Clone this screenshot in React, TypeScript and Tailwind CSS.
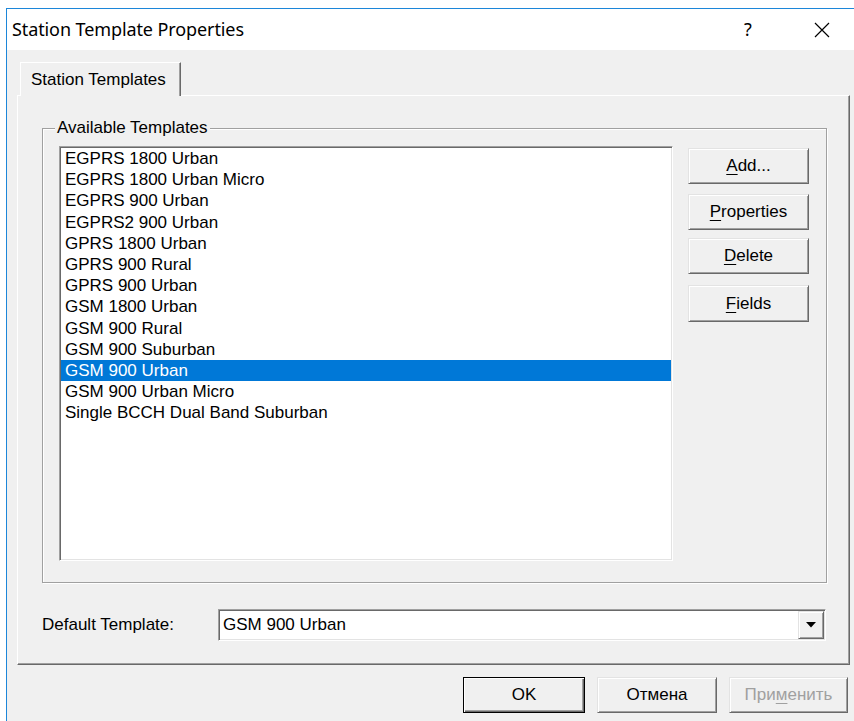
import type { ReactNode } from 'react';

const templates = [
  'EGPRS 1800 Urban',
  'EGPRS 1800 Urban Micro',
  'EGPRS 900 Urban',
  'EGPRS2 900 Urban',
  'GPRS 1800 Urban',
  'GPRS 900 Rural',
  'GPRS 900 Urban',
  'GSM 1800 Urban',
  'GSM 900 Rural',
  'GSM 900 Suburban',
  'GSM 900 Urban',
  'GSM 900 Urban Micro',
  'Single BCCH Dual Band Suburban',
];

const selected = 'GSM 900 Urban';

const ui = { fontFamily: '"Liberation Sans", Arial, sans-serif' };
const caption = { fontFamily: '"Noto Sans", "Open Sans", sans-serif' };

// classic raised 3D edge
const raised =
  'border border-t-[#e3e3e3] border-l-[#e3e3e3] border-b-[#696969] border-r-[#696969] shadow-[inset_1px_1px_0_#fff,inset_-1px_-1px_0_#a0a0a0]';
// classic sunken 3D edge
const sunken =
  'border border-t-[#a0a0a0] border-l-[#a0a0a0] border-b-white border-r-white shadow-[inset_1px_1px_0_#696969,inset_-1px_-1px_0_#e3e3e3] p-px';

function Button({ children, className = '', isDefault = false, disabled = false }: {
  children: ReactNode;
  className?: string;
  isDefault?: boolean;
  disabled?: boolean;
}) {
  const edge = isDefault
    ? 'border border-black shadow-[inset_1px_1px_0_#fff,inset_-1px_-1px_0_#696969,inset_-2px_-2px_0_#a0a0a0]'
    : raised;
  return (
    <div
      className={`flex items-center justify-center bg-[#f0f0f0] text-[17px] ${disabled ? 'text-[#a0a0a0]' : 'text-black'} ${edge} ${className}`}
    >
      <span>{children}</span>
    </div>
  );
}

function Key({ children }: { children: ReactNode }) {
  return <span className="underline underline-offset-[3px] decoration-1">{children}</span>;
}

export default function App() {
  return (
    <div className="w-[854px] h-[721px] bg-white pt-2 pl-[6px] overflow-hidden flex" style={ui}>
      <div className="flex-1 flex flex-col bg-[#f0f0f0] border-t border-l border-[#1c86d9]">
        {/* caption bar */}
        <div className="h-[41px] bg-white flex items-center pl-[5px] pr-[17px] text-black">
          <div className="flex-1 text-[18px] tracking-[-0.1px]" style={caption}>Station Template Properties</div>
          <div className="w-[30px] text-center text-[18px]" style={caption}>?</div>
          <div className="w-[44px]" />
          <div className="w-[30px] flex justify-center">
            <svg width="16" height="16" viewBox="0 0 16 16">
              <path d="M1 1 L15 15 M15 1 L1 15" stroke="#000" strokeWidth="1.2" />
            </svg>
          </div>
        </div>

        <div className="flex flex-col pl-[10px] pr-[4px]">
          {/* tab strip */}
          <div className="mt-[12px] flex">
            <div className="relative z-10 ml-[3px] -mb-px w-[161px] h-[34px] bg-[#f0f0f0] border-t border-l border-white border-r border-r-[#696969] shadow-[inset_-1px_0_0_#a0a0a0] flex items-center pl-[10px] text-[17px]">
              Station Templates
            </div>
          </div>

          {/* tab page */}
          <div className="h-[570px] bg-[#f0f0f0] border border-t-white border-l-white border-b-[#696969] border-r-[#696969] shadow-[inset_-1px_-1px_0_#a0a0a0] pl-[24px] pt-[32px] flex flex-col">
            <div className="w-[785px] h-[455px] border border-[#a0a0a0] shadow-[inset_1px_1px_0_#fff,1px_1px_0_#fff] pl-[16px] flex flex-col">
              <div className="-mt-[11px] ml-[-4px] self-start bg-[#f0f0f0] px-[2px] h-[20px] leading-[20px] text-[17px]">
                Available Templates
              </div>
              <div className="mt-[8px] flex items-start">
                <div className={`w-[614px] h-[415px] bg-white ${sunken}`}>
                  {templates.map((t) => (
                    <div
                      key={t}
                      className={`h-[21.2px] leading-[21.2px] pl-[4px] text-[17px] whitespace-nowrap ${t === selected ? 'bg-[#0078d7] text-white' : 'text-black'}`}
                    >
                      {t}
                    </div>
                  ))}
                </div>
                <div className="ml-[15px] flex flex-col">
                  <Button className="mt-[2px] w-[121px] h-[36px]"><Key>A</Key>dd...</Button>
                  <Button className="mt-[10px] w-[121px] h-[36px]"><Key>P</Key>roperties</Button>
                  <Button className="mt-[8px] w-[121px] h-[36px]"><Key>D</Key>elete</Button>
                  <Button className="mt-[11px] w-[121px] h-[37px]"><Key>F</Key>ields</Button>
                </div>
              </div>
            </div>

            <div className="mt-[26px] flex items-center">
              <div className="w-[176px] text-[17px]">Default Template:</div>
              <div className={`w-[608px] h-[32px] bg-white flex items-stretch ${sunken}`}>
                <div className="flex-1 pl-[3px] flex items-center text-[17px]">GSM 900 Urban</div>
                <div className={`w-[26px] bg-[#f0f0f0] flex items-center justify-center ${raised}`}>
                  <svg width="10" height="6" viewBox="0 0 10 6">
                    <path d="M0 0 H10 L5 5.5 Z" fill="#000" />
                  </svg>
                </div>
              </div>
            </div>
          </div>

          {/* dialog buttons */}
          <div className="mt-[12px] mr-[2px] flex justify-end gap-[12px]">
            <Button isDefault className="w-[122px] h-[36px]">OK</Button>
            <Button className="w-[120px] h-[36px]">Отмена</Button>
            <Button disabled className="w-[119px] h-[36px]">При<Key>м</Key>енить</Button>
          </div>
        </div>
      </div>
    </div>
  );
}
